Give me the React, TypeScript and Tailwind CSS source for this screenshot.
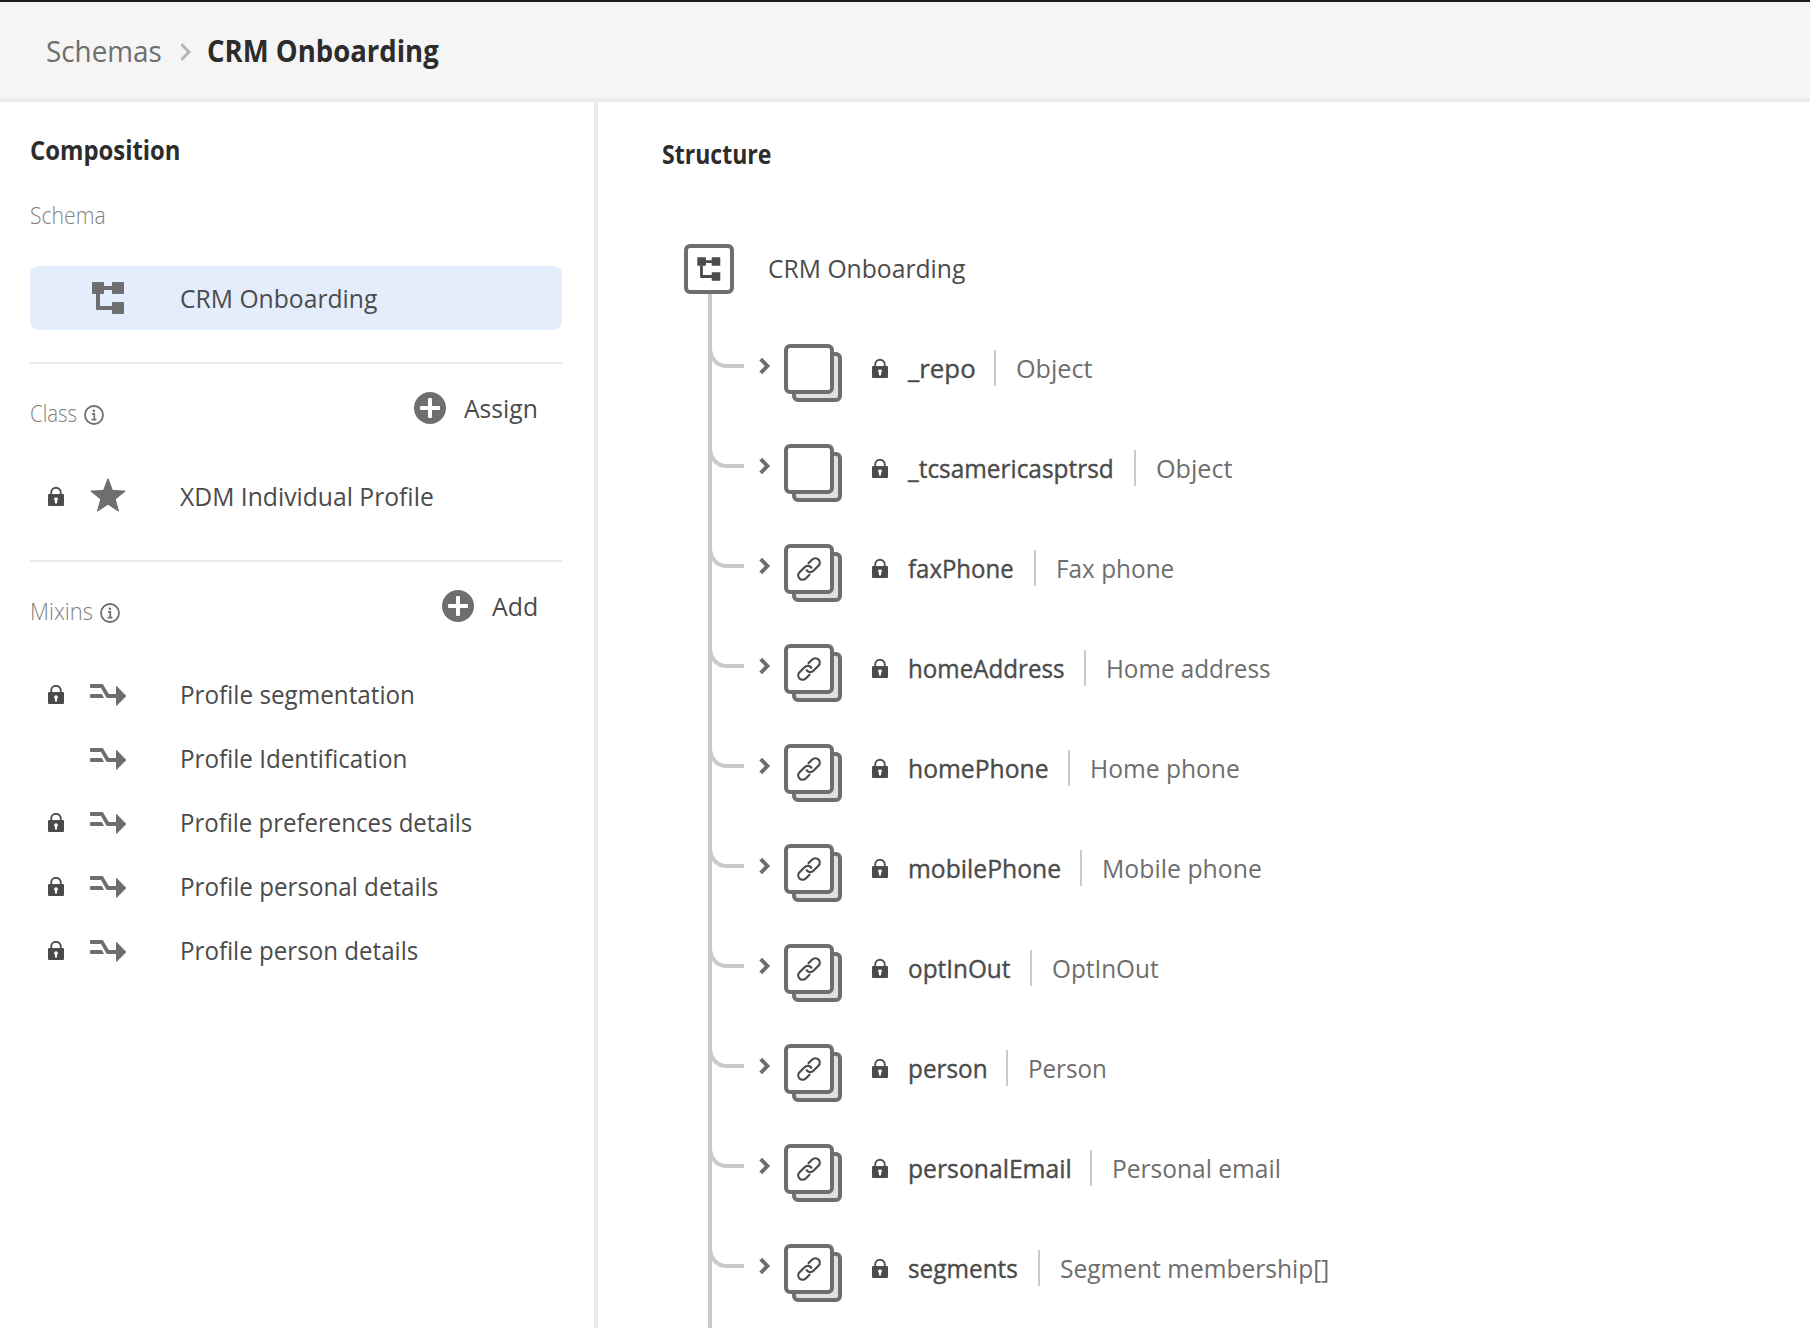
import { useLayoutEffect, useRef, useState, type ReactNode } from "react";

/* Text squeezed horizontally so that it fills exactly `w` pixels. */
function Fit({ w, className = "", children }: { w: number; className?: string; children: ReactNode }) {
  const ref = useRef<HTMLSpanElement>(null);
  const [scale, setScale] = useState(1);
  useLayoutEffect(() => {
    if (ref.current) setScale(w / ref.current.offsetWidth);
  }, [w]);
  return (
    <span className={`inline-flex shrink-0 ${className}`} style={{ width: w }}>
      <span className="origin-left" style={{ transform: `scaleX(${scale})` }}>
        <span ref={ref} className="inline-block whitespace-nowrap">
          {children}
        </span>
      </span>
    </span>
  );
}

function LockIcon({ className = "" }: { className?: string }) {
  return (
    <svg width="16" height="19" viewBox="0 0 16 19" className={`shrink-0 ${className}`}>
      <path d="M3.2 8V5.6a4.8 4.8 0 0 1 9.6 0V8" fill="none" stroke="#4b4b4b" strokeWidth="1.8" />
      <rect y="7" width="16" height="12" rx="1" fill="#4b4b4b" />
      <path d="M8 10.3a2 2 0 0 1 1 3.7v2.4H7V14a2 2 0 0 1 1-3.7Z" fill="#fff" />
    </svg>
  );
}

function SchemaIcon() {
  return (
    <svg width="32" height="32" viewBox="0 0 32 32" fill="#6e6e6e" className="shrink-0">
      <rect width="12" height="12" rx="1" />
      <rect x="20" width="12" height="12" rx="1" />
      <rect x="20" y="20" width="12" height="12" rx="1" />
      <path d="M12 4h8v4h-8zM4 12h4v12h12v4H5a1 1 0 0 1-1-1Z" />
    </svg>
  );
}

function SmallSchemaIcon() {
  return (
    <svg width="24" height="24" viewBox="0 0 24 24" fill="#4b4b4b">
      <rect x="0.3" y="0.2" width="8.6" height="8.6" rx="0.5" />
      <rect x="14.7" y="0.2" width="8.6" height="8.6" rx="0.5" />
      <rect x="14.7" y="15.2" width="8.6" height="8.6" rx="0.5" />
      <path d="M8.5 3.2h6.5v2.8H8.5zM3.1 8.5h2.8v9.6H15v2.8H4a.9.9 0 0 1-.9-.9Z" />
    </svg>
  );
}

function StarIcon() {
  return (
    <svg width="36" height="36" viewBox="0 0 36 36" fill="#6e6e6e" className="shrink-0">
      <path d="M18.477.593 22.8 12.029l12.212.578a.51.51 0 0 1 .3.908l-9.54 7.646 3.224 11.793a.51.51 0 0 1-.772.561L18 26.805 7.78 33.515a.51.51 0 0 1-.772-.561l3.224-11.793L.692 13.515a.51.51 0 0 1 .3-.908l12.212-.578L17.523.593a.51.51 0 0 1 .954 0Z" />
    </svg>
  );
}

function MixinIcon() {
  return (
    <svg width="36" height="22" viewBox="0 0 36 22" fill="#6e6e6e" className="mt-0.5 shrink-0">
      <path d="M1 0h11.2a1.2 1.2 0 0 1 1.1.7L18.8 10H26V2.6a.5.5 0 0 1 .9-.4l9 9.4a.6.6 0 0 1 0 .8l-9 9.2a.5.5 0 0 1-.9-.4V14h-8.6a1.2 1.2 0 0 1-1.1-.7L11 4H1a1 1 0 0 1-1-1V1a1 1 0 0 1 1-1Z" />
      <path d="M1 10h10.8l2.3 4H1a1 1 0 0 1-1-1v-2a1 1 0 0 1 1-1Z" />
    </svg>
  );
}

function InfoIcon() {
  return (
    <svg width="20" height="20" viewBox="0 0 20 20" className="mt-1 shrink-0">
      <circle cx="10" cy="10" r="9" fill="none" stroke="#6e6e6e" strokeWidth="1.8" />
      <circle cx="9.9" cy="5.8" r="1.3" fill="#6e6e6e" />
      <path d="M8 8.9h2.3v5.7M7.6 14.6h4.8" fill="none" stroke="#6e6e6e" strokeWidth="1.6" />
    </svg>
  );
}

function PlusIcon() {
  return (
    <svg width="32" height="32" viewBox="0 0 32 32" className="shrink-0">
      <circle cx="16" cy="16" r="16" fill="#6e6e6e" />
      <rect x="6" y="14" width="20" height="4" rx="1" fill="#fff" />
      <rect x="14" y="6" width="4" height="20" rx="1" fill="#fff" />
    </svg>
  );
}

function LinkIcon() {
  return (
    <svg width="24" height="24" viewBox="0 0 24 24" fill="none" stroke="#4b4b4b" strokeWidth="2.2" className="overflow-visible">
      <g transform="rotate(-45 12 12)">
        <path d="M14.9 7.6h6.1a4.4 4.4 0 0 1 0 8.8H13.8a4.4 4.4 0 0 1-4.1-6" />
        <path d="M9.1 16.4H3a4.4 4.4 0 0 1 0-8.8H10.2a4.4 4.4 0 0 1 4.1 6" />
      </g>
    </svg>
  );
}

function Section({ label, labelW, action, actionW }: { label: string; labelW: number; action: string; actionW: number }) {
  return (
    <div className="flex h-[88px] items-center justify-between pr-6">
      <div className="flex items-center gap-[7px] pt-2.5">
        <Fit w={labelW} className="text-[23px] font-light leading-8 text-[#808080]">{label}</Fit>
        <InfoIcon />
      </div>
      <div className="flex items-center gap-[18px]">
        <PlusIcon />
        <Fit w={actionW}>{action}</Fit>
      </div>
    </div>
  );
}

function SideRow({ icon, label, w, locked = false, selected = false }: { icon: ReactNode; label: string; w: number; locked?: boolean; selected?: boolean }) {
  return (
    <div className={`flex h-16 items-center rounded-lg ${selected ? "bg-[#e4edfb]" : ""}`}>
      <div className="flex w-[60px] justify-start pl-[18px]">{locked && <LockIcon className="mt-px" />}</div>
      <div className="flex w-9 justify-center">{icon}</div>
      <Fit w={w} className="ml-[54px]">{label}</Fit>
    </div>
  );
}

const mixins = [
  { label: "Profile segmentation", w: 235, locked: true },
  { label: "Profile Identification", w: 227, locked: false },
  { label: "Profile preferences details", w: 292.5, locked: true },
  { label: "Profile personal details", w: 258.5, locked: true },
  { label: "Profile person details", w: 238.5, locked: true },
];

const fields = [
  { name: "_repo", nameW: 67.5, cell: 86, type: "Object", typeW: 76.5, link: false },
  { name: "_tcsamericasptrsd", nameW: 205.5, cell: 226, type: "Object", typeW: 76.5, link: false },
  { name: "faxPhone", nameW: 106, cell: 126, type: "Fax phone", typeW: 118, link: true },
  { name: "homeAddress", nameW: 157, cell: 176, type: "Home address", typeW: 165, link: true },
  { name: "homePhone", nameW: 140.5, cell: 160, type: "Home phone", typeW: 149.5, link: true },
  { name: "mobilePhone", nameW: 153, cell: 172, type: "Mobile phone", typeW: 159.5, link: true },
  { name: "optInOut", nameW: 102, cell: 122, type: "OptInOut", typeW: 106.5, link: true },
  { name: "person", nameW: 79.5, cell: 98, type: "Person", typeW: 79, link: true },
  { name: "personalEmail", nameW: 163.5, cell: 182, type: "Personal email", typeW: 169, link: true },
  { name: "segments", nameW: 109.5, cell: 130, type: "Segment membership[]", typeW: 269, link: true },
];

function FieldRow({ f }: { f: (typeof fields)[number] }) {
  return (
    <div className="flex h-[100px] items-center">
      <svg width="34" height="24" viewBox="0 0 34 24" className="-ml-0.5 -mt-5 shrink-0">
        <path d="M0 2C0.5 13 7 20 17 20H34" fill="none" stroke="#cacaca" strokeWidth="4" />
      </svg>
      <svg width="12" height="18" viewBox="0 0 12 18" className="-mt-1 ml-[15px] shrink-0">
        <path d="M1.7 2.1 8.4 9l-6.7 6.9" fill="none" stroke="#6e6e6e" strokeWidth="3.9" />
      </svg>
      <div className="relative ml-[13px] mt-2.5 h-[58px] w-[58px] shrink-0">
        <div className="absolute bottom-0 right-0 size-[50px] rounded-md border-4 border-[#6e6e6e] bg-[#e1e1e1]" />
        <div className="absolute left-0 top-0 flex size-[50px] items-center justify-center rounded-md border-4 border-[#6e6e6e] bg-white">
          {f.link && <LinkIcon />}
        </div>
      </div>
      <LockIcon className="ml-[30px] mt-px" />
      <div className="ml-5 shrink-0" style={{ width: f.cell }}>
        <Fit w={f.nameW} className="[-webkit-text-stroke:0.4px_#4b4b4b]">{f.name}</Fit>
      </div>
      <div className="h-9 w-0.5 bg-[#cacaca]" />
      <Fit w={f.typeW} className="ml-5 text-[#6e6e6e]">{f.type}</Fit>
    </div>
  );
}

export default function App() {
  return (
    <div className="flex h-screen flex-col overflow-hidden border-t-2 border-[#1e1e1e] bg-white font-['Open_Sans',sans-serif] text-[26px] leading-9 text-[#4b4b4b]">
      <header className="flex h-[100px] shrink-0 items-center border-b-4 border-[#eaeaea] bg-[#f5f5f5] pl-[46px] text-[30px]">
        <Fit w={116} className="mt-0.5 text-[#6e6e6e]">Schemas</Fit>
        <svg width="12" height="18" viewBox="0 0 12 18" className="ml-[18px] mt-1">
          <path d="M2.4 2.2 9 9l-6.6 6.8" fill="none" stroke="#b3b3b3" strokeWidth="3" strokeLinecap="round" />
        </svg>
        <Fit w={232} className="ml-[15px] mt-0.5 font-bold text-[#2c2c2c]">CRM Onboarding</Fit>
      </header>

      <div className="flex min-h-0 flex-1">
        <aside className="w-[598px] shrink-0 border-r-4 border-[#eaeaea] pl-[30px] pr-8 pt-[30px]">
          <h2 className="flex h-9 font-bold text-[#2c2c2c]">
            <Fit w={150.5}>Composition</Fit>
          </h2>
          <div className="mt-[31px] flex h-8 text-[23px] font-light leading-8 text-[#808080]">
            <Fit w={75.5}>Schema</Fit>
          </div>
          <div className="mt-[35px]">
            <SideRow icon={<SchemaIcon />} label="CRM Onboarding" w={197.5} selected />
          </div>
          <hr className="mt-8 border-t-2 border-[#eaeaea]" />
          <Section label="Class" labelW={47} action="Assign" actionW={74} />
          <div className="mt-3">
            <SideRow icon={<StarIcon />} label="XDM Individual Profile" w={253.5} locked />
          </div>
          <hr className="mt-8 border-t-2 border-[#eaeaea]" />
          <Section label="Mixins" labelW={63} action="Add" actionW={46} />
          <div className="mt-3">
            {mixins.map((m) => (
              <SideRow key={m.label} icon={<MixinIcon />} label={m.label} w={m.w} locked={m.locked} />
            ))}
          </div>
        </aside>

        <main className="flex min-w-0 flex-1 flex-col pl-[63px] pt-[34px]">
          <h2 className="flex h-9 font-bold text-[#2c2c2c]">
            <Fit w={109} className="ml-px">Structure</Fit>
          </h2>
          <div className="ml-[23px] mt-[72px] flex h-[50px] shrink-0 items-center">
            <div className="flex size-[50px] items-center justify-center rounded-md border-4 border-[#6e6e6e]">
              <SmallSchemaIcon />
            </div>
            <Fit w={197.5} className="-mt-0.5 ml-[34px]">CRM Onboarding</Fit>
          </div>
          <div className="ml-[47px] flex-1 border-l-4 border-[#cacaca] pt-6">
            {fields.map((f) => (
              <FieldRow key={f.name} f={f} />
            ))}
          </div>
        </main>
      </div>
    </div>
  );
}
